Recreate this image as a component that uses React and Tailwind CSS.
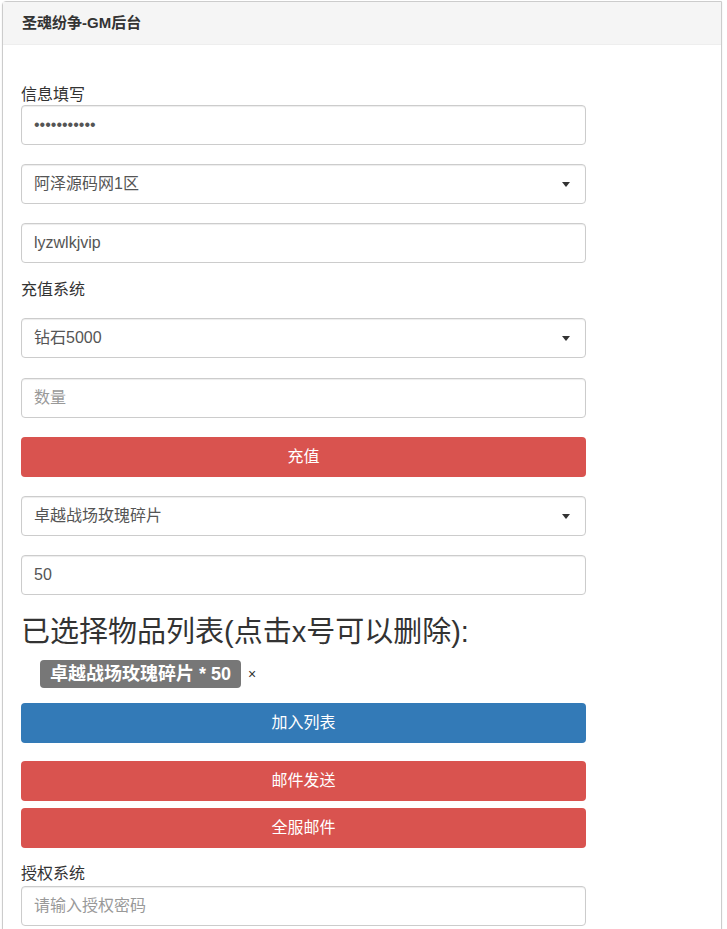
import React from "react";

const font = { fontFamily: '"Liberation Sans", "Noto Sans CJK SC", sans-serif' };

function TextInput({ value, placeholder, className = "" }) {
  return (
    <div
      className={`h-[40px] w-full rounded-[4px] border border-[#ccc] bg-white px-[12px] flex items-center text-[16px] shadow-[inset_0_1px_1px_rgba(0,0,0,0.075)] ${className}`}
    >
      {value ? (
        <span className="text-[#555]">{value}</span>
      ) : (
        <span className="text-[#999]">{placeholder}</span>
      )}
    </div>
  );
}

function SelectBox({ value, className = "" }) {
  return (
    <div
      className={`h-[40px] w-full rounded-[4px] border border-[#ccc] bg-white pl-[12px] pr-[15px] flex items-center justify-between text-[16px] text-[#555] shadow-[inset_0_1px_1px_rgba(0,0,0,0.075)] ${className}`}
    >
      <span>{value}</span>
      <span className="w-0 h-0 border-l-[4px] border-r-[4px] border-t-[5px] border-l-transparent border-r-transparent border-t-[#333]" />
    </div>
  );
}

function Btn({ children, color, className = "" }) {
  return (
    <div
      className={`h-[40px] w-full rounded-[4px] flex items-center justify-center text-[16px] text-white ${color} ${className}`}
    >
      {children}
    </div>
  );
}

export default function App() {
  return (
    <div className="min-h-[929px] bg-white pt-[1px] pl-[2px]" style={font}>
      <div className="w-[720px] min-h-[930px] border border-[#ccc] rounded-tl-[4px] shadow-[0_1px_2px_rgba(0,0,0,0.1)]">
        {/* header */}
        <div className="h-[43px] bg-[#f5f5f5] border-b border-[#eee] px-[19px] flex items-center">
          <span className="text-[15px] font-bold text-[#333]">圣魂纷争-GM后台</span>
        </div>

        {/* body */}
        <div className="pl-[18px] w-[583px] flex flex-col pb-[10px]">
          <div className="mt-[40px] h-[20px] leading-[20px] text-[16px] text-[#333]">信息填写</div>
          <TextInput value="•••••••••••" />
          <SelectBox value="阿泽源码网1区" className="mt-[19px]" />
          <TextInput value="lyzwlkjvip" className="mt-[19px]" />

          <div className="mt-[17px] h-[20px] leading-[20px] text-[16px] text-[#333]">充值系统</div>
          <SelectBox value="钻石5000" className="mt-[18px]" />
          <TextInput placeholder="数量" className="mt-[20px]" />
          <Btn color="bg-[#d9534f]" className="mt-[19px]">充值</Btn>

          <SelectBox value="卓越战场玫瑰碎片" className="mt-[19px]" />
          <TextInput value="50" className="mt-[19px]" />

          <div className="mt-[20px] h-[34px] leading-[34px] text-[29px] text-[#333]">
            已选择物品列表(点击x号可以删除):
          </div>
          <div className="mt-[11px] flex items-center">
            <span className="ml-[19px] h-[28px] rounded-[4px] bg-[#777] px-[10px] flex items-center text-[18px] font-bold text-white">
              卓越战场玫瑰碎片 * 50
            </span>
            <span className="ml-[7px] text-[14px] text-[#333]">×</span>
          </div>

          <Btn color="bg-[#337ab7]" className="mt-[15px]">加入列表</Btn>
          <Btn color="bg-[#d9534f]" className="mt-[18px]">邮件发送</Btn>
          <Btn color="bg-[#d9534f]" className="mt-[7px]">全服邮件</Btn>

          <div className="mt-[16px] h-[20px] leading-[20px] text-[16px] text-[#333]">授权系统</div>
          <TextInput placeholder="请输入授权密码" className="mt-[2px]" />
        </div>
      </div>
    </div>
  );
}
